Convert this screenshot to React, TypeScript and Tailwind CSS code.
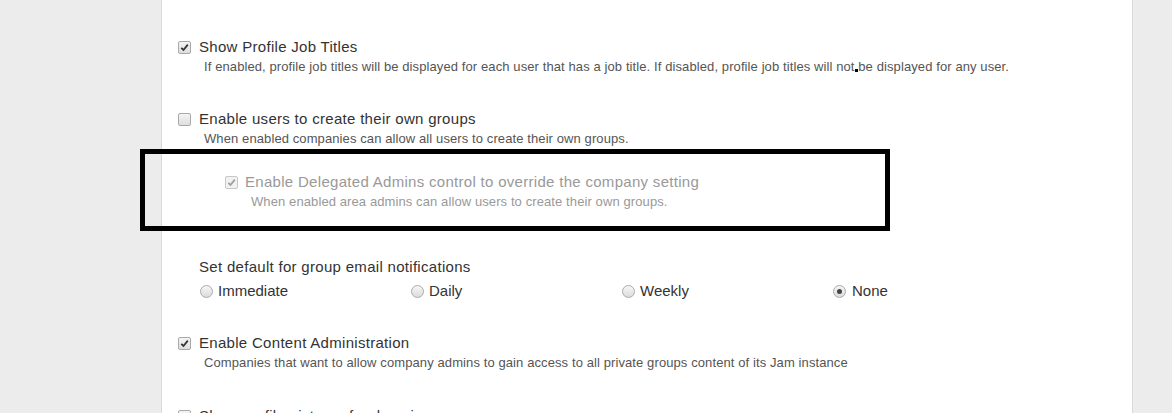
import React from "react";

function Check({ checked, disabled }: { checked?: boolean; disabled?: boolean }) {
  return (
    <span
      className={`inline-flex h-[13px] w-[13px] shrink-0 items-center justify-center rounded-[2px] border ${
        disabled ? "border-[#c8c8c8] bg-[#f2f2f2]" : "border-[#a9a9a9] bg-gradient-to-b from-[#f4f4f4] to-[#dedede]"
      }`}
    >
      {checked && (
        <svg width="9" height="9" viewBox="0 0 9 9">
          <path
            d="M1.3 4.8 L3.5 7 L7.8 1.6"
            fill="none"
            stroke={disabled ? "#a0a0a0" : "#333"}
            strokeWidth="1.8"
          />
        </svg>
      )}
    </span>
  );
}

function Radio({ checked }: { checked?: boolean }) {
  return (
    <span className="inline-flex h-[13px] w-[13px] shrink-0 items-center justify-center rounded-full border border-[#aaaaaa] bg-gradient-to-b from-[#f6f6f6] to-[#dcdcdc]">
      {checked && <span className="h-[5px] w-[5px] rounded-full bg-[#444]" />}
    </span>
  );
}

export default function App() {
  const font = { fontFamily: '"Liberation Sans", Arial, sans-serif' };
  return (
    <div className="relative flex h-[413px] w-[1172px] overflow-hidden bg-[#ececec]" style={font}>
      <div className="w-[162px] shrink-0 border-r border-[#dadada]" />
      <div className="flex w-[970px] shrink-0 flex-col bg-white pl-[16px] pt-[37px] text-[#333]">
        {/* Item 1 */}
        <div className="flex h-[20px] items-center gap-[8px] text-[15px] tracking-[0.3px]">
          <Check checked />
          <span>Show Profile Job Titles</span>
        </div>
        <div className="h-[20px] pl-[26px] text-[13px] leading-[20px] tracking-[0.1px] text-[#555]">
          If enabled, profile job titles will be displayed for each user that has a job title. If disabled, profile job titles will not be displayed for any user.
        </div>

        {/* Item 2 */}
        <div className="mt-[32px] flex h-[20px] items-center gap-[8px] text-[15px] tracking-[0.3px]">
          <Check />
          <span>Enable users to create their own groups</span>
        </div>
        <div className="h-[20px] pl-[26px] text-[13px] leading-[20px] tracking-[0.1px] text-[#555]">
          When enabled companies can allow all users to create their own groups.
        </div>

        {/* Delegated */}
        <div className="mt-[23px] flex h-[20px] items-center gap-[7px] pl-[47px] text-[15px] tracking-[0.3px] text-[#999]">
          <Check checked disabled />
          <span>Enable Delegated Admins control to override the company setting</span>
        </div>
        <div className="h-[20px] pl-[73px] text-[13px] leading-[20px] tracking-[0.1px] text-[#999]">
          When enabled area admins can allow users to create their own groups.
        </div>

        {/* Email notifications */}
        <div className="mt-[45px] h-[20px] pl-[21px] text-[15px] leading-[20px] tracking-[0.3px]">
          Set default for group email notifications
        </div>
        <div className="mt-[4px] flex h-[20px] pl-[22px] text-[15px]">
          {[
            { l: "Immediate", c: false },
            { l: "Daily", c: false },
            { l: "Weekly", c: false },
            { l: "None", c: true },
          ].map((r) => (
            <div key={r.l} className="flex w-[211px] items-center gap-[5px]">
              <Radio checked={r.c} />
              <span className={r.c ? "ml-[1px]" : ""}>{r.l}</span>
            </div>
          ))}
        </div>

        {/* Content admin */}
        <div className="mt-[32px] flex h-[20px] items-center gap-[8px] text-[15px] tracking-[0.3px]">
          <Check checked />
          <span>Enable Content Administration</span>
        </div>
        <div className="h-[20px] pl-[26px] text-[13px] leading-[20px] tracking-[0.1px] text-[#555]">
          Companies that want to allow company admins to gain access to all private groups content of its Jam instance
        </div>

        {/* Next cut-off item */}
        <div className="mt-[33px] flex h-[20px] items-center gap-[8px] text-[15px] tracking-[0.3px]">
          <Check />
          <span>Show profile pictures for domains</span>
        </div>
      </div>
      <div className="flex-1 border-l border-[#dadada]" />

      {/* annotation box */}
      <div className="absolute left-[140px] top-[149px] h-[82px] w-[750px] border-[5px] border-black" />
      <div className="absolute left-[855px] top-[69px] h-[3px] w-[3px] bg-black" />
    </div>
  );
}
